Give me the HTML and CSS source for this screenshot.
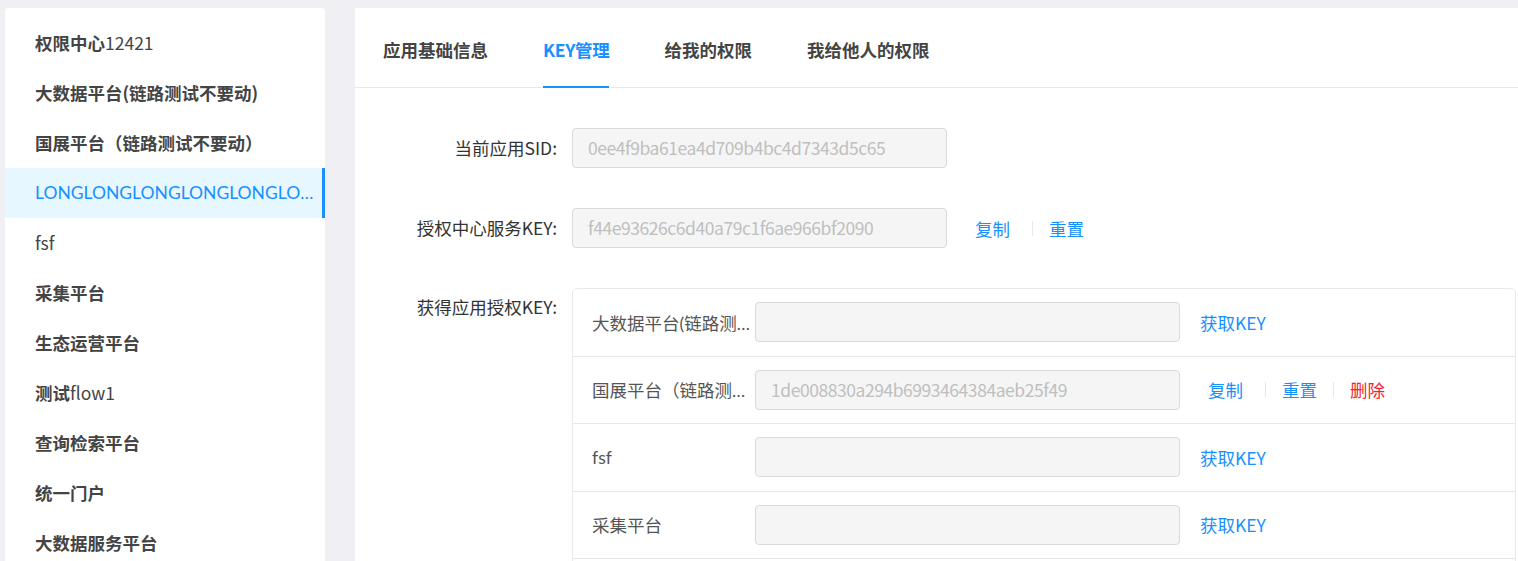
FILE: index.html
```html
<!DOCTYPE html>
<html lang="zh-CN">
<head>
<meta charset="utf-8">
<title>KEY管理</title>
<link rel="stylesheet" href="styles.css">
</head>
<body>
<div class="layout">
  <aside class="sidebar">
    <ul class="menu">
      <li class="item">权限中心<span class="lat">12421</span></li>
      <li class="item">大数据平台(链路测试不要动)</li>
      <li class="item">国展平台（链路测试不要动）</li>
      <li class="item active"><span class="lat">LONGLONGLONGLONGLONGLONGLONGLONG</span></li>
      <li class="item"><span class="lat">fsf</span></li>
      <li class="item">采集平台</li>
      <li class="item">生态运营平台</li>
      <li class="item">测试<span class="lat">flow1</span></li>
      <li class="item">查询检索平台</li>
      <li class="item">统一门户</li>
      <li class="item">大数据服务平台</li>
    </ul>
  </aside>
  <main class="panel">
    <nav class="tabs">
      <div class="tab">应用基础信息</div>
      <div class="tab active">KEY管理</div>
      <div class="tab">给我的权限</div>
      <div class="tab">我给他人的权限</div>
    </nav>
    <section class="form">
      <div class="row">
        <label class="label">当前应用SID:</label>
        <div class="control">
          <div class="input">0ee4f9ba61ea4d709b4bc4d7343d5c65</div>
        </div>
      </div>
      <div class="row">
        <label class="label">授权中心服务KEY:</label>
        <div class="control">
          <div class="input">f44e93626c6d40a79c1f6ae966bf2090</div>
          <div class="actions">
            <a class="link copy">复制</a><span class="divider"></span><a class="link">重置</a>
          </div>
        </div>
      </div>
      <div class="row top">
        <label class="label">获得应用授权KEY:</label>
        <div class="box">
          <div class="krow">
            <div class="name">大数据平台(链路测试不要动)</div>
            <div class="input wide"></div>
            <a class="link get">获取KEY</a>
          </div>
          <div class="krow">
            <div class="name">国展平台（链路测试不要动）</div>
            <div class="input wide">1de008830a294b6993464384aeb25f49</div>
            <div class="actions">
              <a class="link copy">复制</a><span class="divider"></span><a class="link">重置</a><span class="divider"></span><a class="link danger">删除</a>
            </div>
          </div>
          <div class="krow">
            <div class="name">fsf</div>
            <div class="input wide"></div>
            <a class="link get">获取KEY</a>
          </div>
          <div class="krow">
            <div class="name">采集平台</div>
            <div class="input wide"></div>
            <a class="link get">获取KEY</a>
          </div>
          <div class="krow">
            <div class="name">生态运营平台</div>
            <div class="input wide"></div>
            <a class="link get">获取KEY</a>
          </div>
        </div>
      </div>
    </section>
  </main>
</div>
</body>
</html>
```
FILE: styles.css
```css
html, body {
  margin: 0;
  height: 100%;
  overflow: hidden;
}
body {
  background: #f0eff4;
  font-family: "Noto Sans CJK SC", "Noto Sans", sans-serif;
  font-size: 17.5px;
  color: #333;
}
.layout {
  display: flex;
  gap: 30px;
  padding: 8px 0 0 5px;
  height: 100%;
  box-sizing: border-box;
}
.sidebar {
  width: 320px;
  flex: none;
  background: #fff;
  border-radius: 3px 3px 0 0;
}
.menu {
  list-style: none;
  margin: 0;
  padding: 10px 0 0;
}
.item {
  height: 50px;
  line-height: 50px;
  padding: 0 18px 0 30px;
  font-weight: 700;
  color: #444;
  white-space: nowrap;
  overflow: hidden;
  text-overflow: ellipsis;
}
.item .lat {
  font-weight: 400;
}
.item.active {
  background: #e6f7ff;
  color: #1890ff;
  box-shadow: inset -3px 0 0 #1890ff;
  font-family: "Lato", "Noto Sans CJK SC", sans-serif;
  font-weight: 400;
  padding-right: 11px;
}
.panel {
  flex: 1;
  background: #fff;
  min-width: 0;
}
.tabs {
  display: flex;
  gap: 55px;
  padding: 0 0 0 28px;
  height: 79px;
  border-bottom: 1px solid #e8e8e8;
}
.tab {
  line-height: 84px;
  font-weight: 700;
  color: #444;
  position: relative;
}
.tab.active {
  color: #1890ff;
  letter-spacing: -0.3px;
}
.tab.active::after {
  content: "";
  position: absolute;
  left: 0;
  right: 0;
  bottom: -1px;
  height: 2px;
  background: #1890ff;
}
.form {
  padding: 40px 2px 0 0;
}
.row {
  display: flex;
  align-items: center;
  margin-bottom: 40px;
}
.row.top {
  align-items: flex-start;
  margin-bottom: 0;
}
.label {
  width: 202px;
  flex: none;
  text-align: right;
  margin-right: 15px;
  line-height: 40px;
  color: #333;
}
.row.top .label {
  line-height: 38px;
}
.control {
  display: flex;
  align-items: center;
}
.input {
  width: 375px;
  height: 40px;
  box-sizing: border-box;
  border: 1px solid #d9d9d9;
  border-radius: 4px;
  background: #f5f5f5;
  color: #bfbfbf;
  line-height: 38px;
  padding: 0 15px;
  letter-spacing: -0.45px;
  white-space: nowrap;
  overflow: hidden;
}
.input.wide {
  width: 425px;
}
.actions {
  display: flex;
  align-items: center;
  margin-left: 28px;
}
.link {
  color: #1890ff;
  cursor: pointer;
}
.link.copy {
  margin-right: 6px;
}
.link.danger {
  color: #f5222d;
}
.link.get {
  margin-left: 20px;
}
.divider {
  width: 1px;
  height: 15px;
  background: #e8e8e8;
  margin: 0 16px;
}
.box {
  flex: 1;
  min-width: 0;
  border: 1px solid #e8e8e8;
  border-radius: 5px 5px 0 0;
}
.krow {
  display: flex;
  align-items: center;
  height: 66.5px;
  border-bottom: 1px solid #e8e8e8;
}
.name {
  width: 160px;
  flex: none;
  padding-left: 19px;
  margin-right: 3px;
  font-family: "Lato", "Noto Sans CJK SC", sans-serif;
  white-space: nowrap;
  overflow: hidden;
  text-overflow: ellipsis;
  color: #555;
}
```
